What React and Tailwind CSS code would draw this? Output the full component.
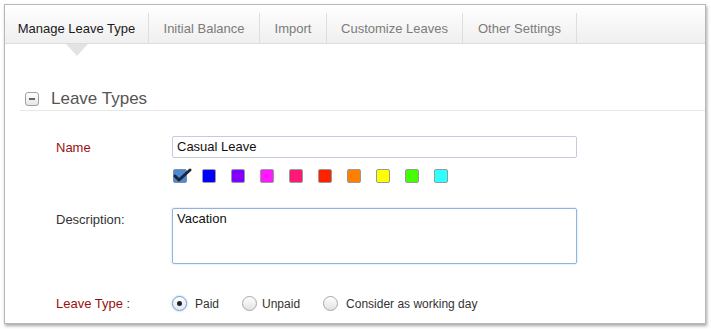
import React from 'react';

const tabs = [
    { label: 'Manage Leave Type', w: 'w-[144px]', active: true },
    { label: 'Initial Balance', w: 'w-[111px]' },
    { label: 'Import', w: 'w-[67px]' },
    { label: 'Customize Leaves', w: 'w-[136px]' },
    { label: 'Other Settings', w: 'w-[114px]' },
];

const swatches = ['#0000ff', '#7f00ff', '#ff19ff', '#ff1a75', '#ff2200', '#ff8000', '#ffff00', '#44ff00', '#2effff'];

// radio like the old mac style
const Radio = ({ checked }) => (
    <span
        className={`w-[15px] h-[15px] rounded-full border flex items-center justify-center ${checked ? 'border-[#7a9cc8] bg-gradient-to-b from-[#ffffff] to-[#dfe8f3] shadow-[0_0_2px_rgba(80,130,200,0.6)]' : 'border-[#a8a8a8] bg-gradient-to-b from-[#ffffff] to-[#e2e2e2]'}`}
    >
        {checked && <span className="w-[5px] h-[5px] rounded-full bg-[#222]" />}
    </span>
);

const App = () => {
    return (
        <div className="w-[711px] h-[329px] bg-white pt-[4px] pl-[4px] font-['Liberation_Sans',Arial,sans-serif] text-[13px]">
            <div className="w-[702px] h-[320px] border border-[#b8b8b8] shadow-[1px_2px_3px_rgba(0,0,0,0.35)] bg-white overflow-hidden">
                {/* tabs */}
                <div className="h-[39px] pt-[8px] bg-gradient-to-b from-[#ffffff] to-[#efefef] border-b border-[#dcdcdc] flex">
                    {tabs.map(t => (
                        <div
                            key={t.label}
                            className={`${t.w} h-[30px] pt-[2px] relative flex items-center justify-center border-r border-[#dedede] ${t.active ? 'text-[#1a1a1a]' : 'text-[#7b7b7b]'}`}
                        >
                            {t.label}
                            {t.active && (
                                <span className="absolute left-1/2 -translate-x-1/2 top-[31px] w-0 h-0 border-l-[11px] border-r-[11px] border-t-[12px] border-l-transparent border-r-transparent border-t-[#e3e3e3] z-10" />
                            )}
                        </div>
                    ))}
                </div>

                {/* section */}
                <div className="ml-[15px]">
                    <div className="mt-[45px] h-[22px] border-b border-[#e6e6e6] flex items-start">
                        <span className="ml-[5px] mt-[3px] w-[14px] h-[14px] rounded-[3px] border border-[#a0a0a0] bg-gradient-to-b from-[#ffffff] to-[#e6e6e6] flex items-center justify-center">
                            <span className="w-[6px] h-[2px] bg-[#666]" />
                        </span>
                        <span className="ml-[12px] text-[17px] leading-[20px] text-[#555]">Leave Types</span>
                    </div>

                    <div className="pl-[36px]">
                        {/* name */}
                        <div className="mt-[25px] flex items-center">
                            <label className="w-[116px] pt-[2px] text-[#9a0f0f]">Name</label>
                            <div className="w-[405px] h-[22px] border border-[#c3cbdd] rounded-[2px] px-[4px] flex items-center text-[#111]">
                                Casual Leave
                            </div>
                        </div>
                        <div className="mt-[11px] ml-[117px] flex gap-[15px]">
                            <span className="relative w-[14px] h-[14px] rounded-[2px] border border-[#7f8ea6] bg-[#4b8ad6]">
                                <svg className="absolute -left-[1px] -top-[4px]" width="20" height="18" viewBox="0 0 20 18">
                                    <path d="M2 10 L6 14 L17 4" fill="none" stroke="#1f2533" strokeWidth="3" strokeLinecap="round" strokeLinejoin="round" />
                                </svg>
                            </span>
                            {swatches.map(c => (
                                <span
                                    key={c}
                                    className="w-[14px] h-[14px] rounded-[2px] border border-[#999]"
                                    style={{ backgroundColor: c }}
                                />
                            ))}
                        </div>

                        {/* description */}
                        <div className="mt-[25px] flex items-start">
                            <label className="w-[116px] pt-[4px] leading-[16px] text-[#333]">Description:</label>
                            <div className="w-[405px] h-[56px] border border-[#8fb3e3] rounded-[2px] px-[4px] pt-[2px] leading-[16px] text-[#111] shadow-[0_0_2px_rgba(120,160,220,0.5)]">
                                Vacation
                            </div>
                        </div>

                        {/* leave type */}
                        <div className="mt-[30px] flex items-center">
                            <label className="w-[116px] text-[#9a0f0f]">Leave Type :</label>
                            <div className="flex items-center text-[12px] text-[#333]">
                                <Radio checked />
                                <span className="ml-[8px]">Paid</span>
                                <span className="ml-[23px]"><Radio /></span>
                                <span className="ml-[5px]">Unpaid</span>
                                <span className="ml-[23px]"><Radio /></span>
                                <span className="ml-[8px]">Consider as working day</span>
                            </div>
                        </div>
                    </div>
                </div>
            </div>
        </div>
    );
}

export default App;
